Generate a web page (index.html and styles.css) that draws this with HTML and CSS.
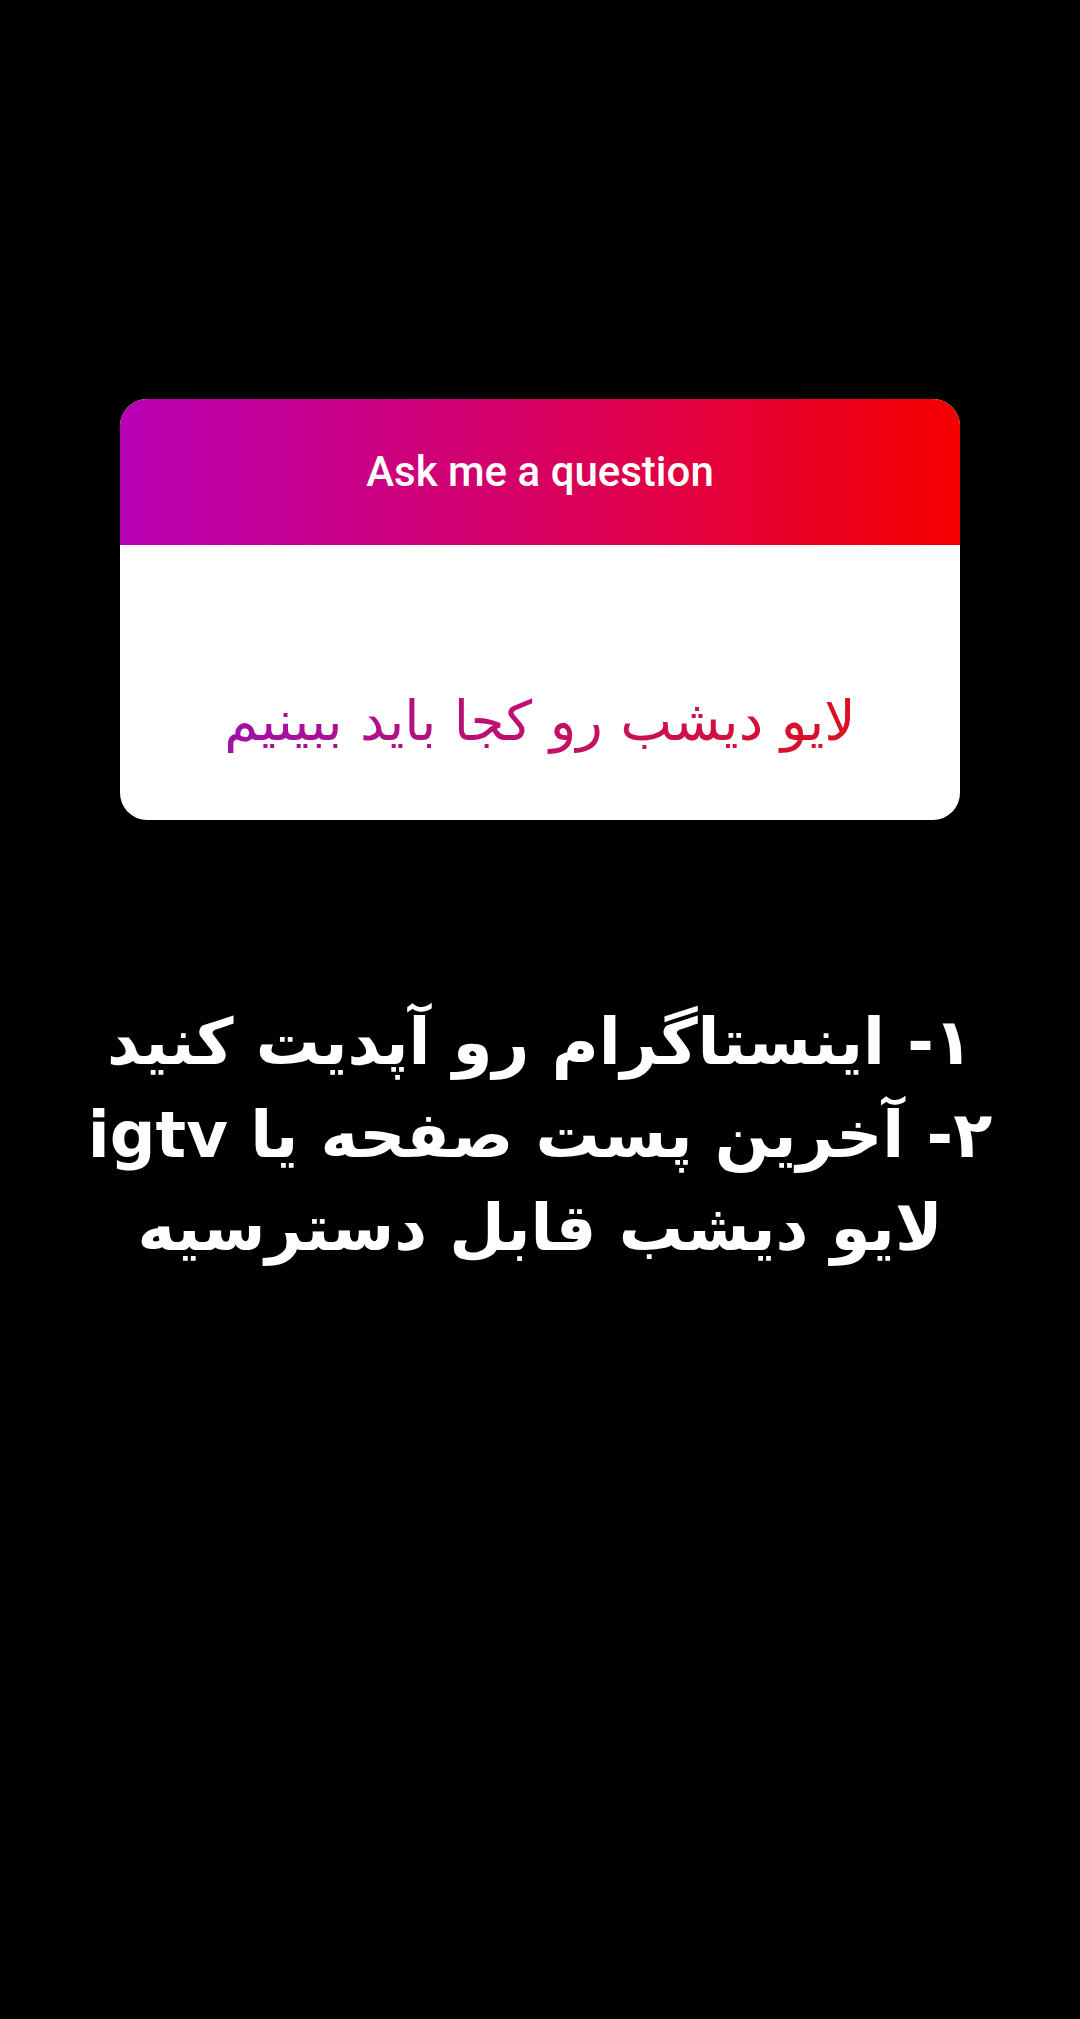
FILE: index.html
```html
<!DOCTYPE html>
<html lang="fa">
<head>
<meta charset="utf-8">
<title>Ask me a question</title>
<link rel="stylesheet" href="styles.css">
</head>
<body>
<main class="screen">
  <section class="sticker">
    <header class="sticker-head">
      <h1 class="sticker-title">Ask me a question</h1>
    </header>
    <div class="sticker-body">
      <p class="sticker-answer" dir="rtl">لایو دیشب رو کجا باید ببینیم</p>
    </div>
  </section>
  <div class="caption" dir="rtl">
    <p class="caption-line">۱- اینستاگرام رو آپدیت کنید</p>
    <p class="caption-line">۲- آخرین پست صفحه یا igtv</p>
    <p class="caption-line">لایو دیشب قابل دسترسیه</p>
  </div>
</main>
</body>
</html>
```
FILE: styles.css
```css
html, body {
  margin: 0;
  padding: 0;
  background: #000;
}

.screen {
  width: 1080px;
  height: 2019px;
  display: flex;
  flex-direction: column;
  align-items: center;
  padding-top: 399px;
  box-sizing: border-box;
}

.sticker {
  width: 840px;
  border-radius: 27px;
  overflow: hidden;
  background: #fff;
  display: flex;
  flex-direction: column;
}

.sticker-head {
  height: 146px;
  background: linear-gradient(90deg, #b800b4 0%, #d4006a 45%, #e4003a 70%, #f50000 100%);
  display: flex;
  align-items: center;
  justify-content: center;
}

.sticker-title {
  margin: 0;
  font-family: Roboto, "Liberation Sans", sans-serif;
  font-weight: 500;
  font-size: 42px;
  color: #fff;
  line-height: 1;
}

.sticker-body {
  height: 275px;
  display: flex;
  align-items: center;
  justify-content: center;
  padding-top: 76px;
  box-sizing: border-box;
}

.sticker-answer {
  margin: 0;
  font-family: "DejaVu Sans", sans-serif;
  font-size: 55px;
  line-height: 1.2;
  background: linear-gradient(90deg, #a010a8 0%, #c0106a 50%, #dc1020 100%);
  -webkit-background-clip: text;
  background-clip: text;
  color: transparent;
}

.caption {
  margin-top: 176px;
  display: flex;
  flex-direction: column;
  align-items: center;
}

.caption-line {
  margin: 0;
  font-family: "DejaVu Sans", sans-serif;
  font-weight: bold;
  font-size: 64px;
  line-height: 93px;
  color: #fff;
  text-align: center;
  white-space: nowrap;
}
```
